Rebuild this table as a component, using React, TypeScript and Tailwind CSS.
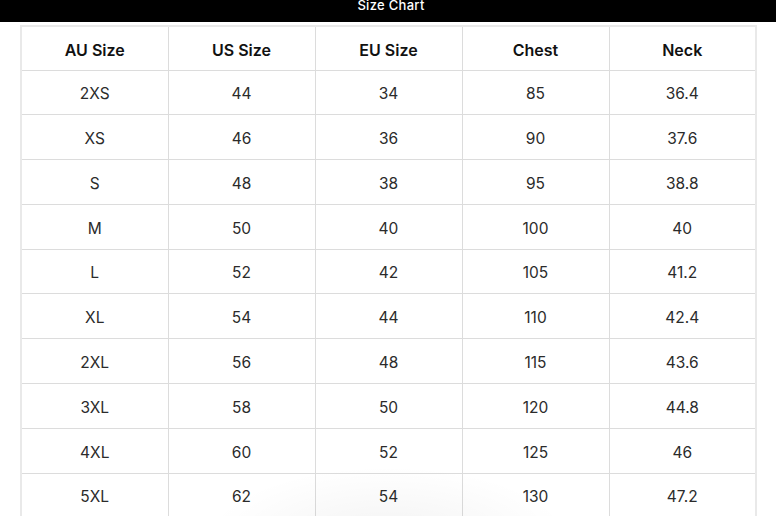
import React from "react";

const rows = [
  ["2XS", "44", "34", "85", "36.4"],
  ["XS", "46", "36", "90", "37.6"],
  ["S", "48", "38", "95", "38.8"],
  ["M", "50", "40", "100", "40"],
  ["L", "52", "42", "105", "41.2"],
  ["XL", "54", "44", "110", "42.4"],
  ["2XL", "56", "48", "115", "43.6"],
  ["3XL", "58", "50", "120", "44.8"],
  ["4XL", "60", "52", "125", "46"],
  ["5XL", "62", "54", "130", "47.2"],
];

const headers = ["AU Size", "US Size", "EU Size", "Chest", "Neck"];

const App = () => {
  return (
    <div className="w-[776px] h-[516px] overflow-hidden bg-white font-['Inter',sans-serif]">
      <div className="h-[22px] bg-black overflow-hidden flex justify-center">
        <span className="text-white text-[13px] font-medium leading-[13px] -mt-[1px] ml-[6px] tracking-[0.3px]">
          Size Chart
        </span>
      </div>
      <div className="relative mx-[20px] mt-[3px]">
        <table className="w-[737px] table-fixed border-collapse border-2 border-[#e9e9e9] text-[15.5px] text-[#2b2b2b]">
          <thead>
            <tr className="h-[44px]">
              {headers.map((h) => (
                <th
                  key={h}
                  className="border border-[#dcdcdc] pt-[3px] text-[16px] font-semibold text-[#111] text-center"
                >
                  {h}
                </th>
              ))}
            </tr>
          </thead>
          <tbody>
            {rows.map((r) => (
              <tr key={r[0]} className="h-[44.8px]">
                {r.map((c, i) => (
                  <td key={i} className="border border-[#dcdcdc] pt-[3px] text-center">
                    {c}
                  </td>
                ))}
              </tr>
            ))}
          </tbody>
        </table>
        <div className="pointer-events-none absolute left-[180px] right-[180px] top-[440px] h-[80px] bg-[radial-gradient(ellipse_at_bottom,rgba(0,0,0,0.05),transparent_70%)]" />
      </div>
    </div>
  );
};

export default App;
